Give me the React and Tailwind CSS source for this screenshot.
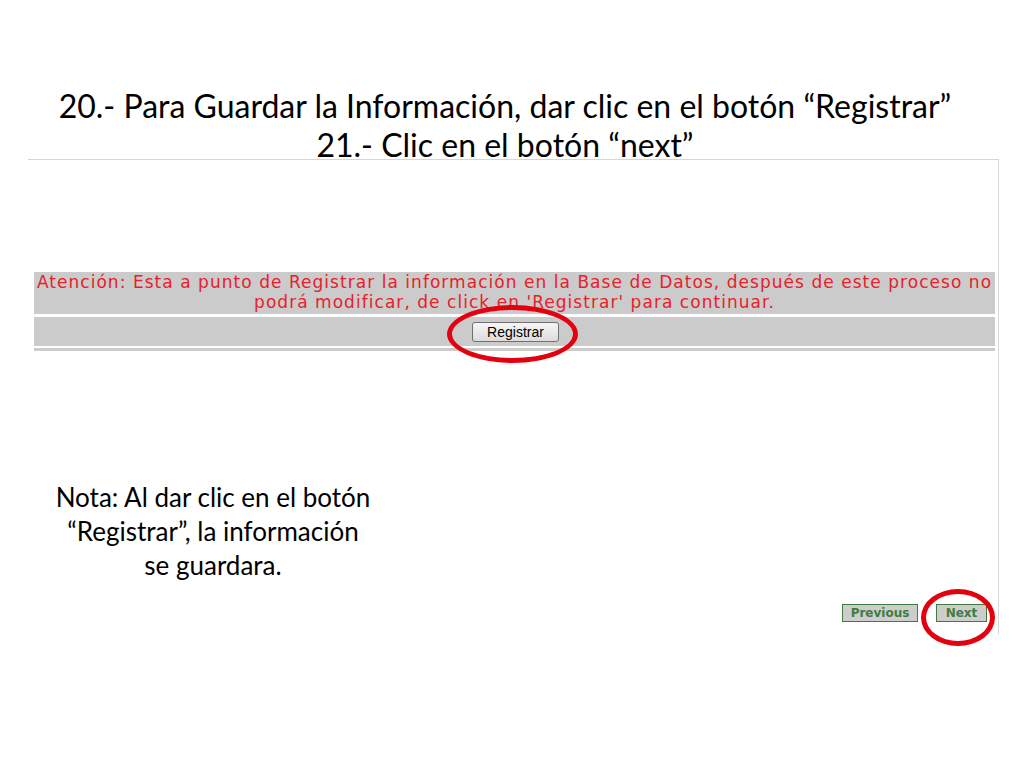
import React from "react";

const RedRing = ({ className }) => (
    <div className={"pointer-events-none absolute rounded-[50%] border-[5px] border-[#e3000f] " + className} />
);

const App = () => {
    return (
        <div className="relative w-[1024px] h-[768px] bg-white overflow-hidden">
            {/* slide title */}
            <div className="h-[159px] pt-[86px] pr-[14px] text-center text-black text-[32px] leading-[39px] font-['Lato','Open_Sans',sans-serif]">
                <p>20.- Para Guardar la Información, dar clic en el botón “Registrar”</p>
                <p>21.- Clic en el botón “next”</p>
            </div>

            {/* screenshot frame */}
            <div className="ml-[28px] w-[971px] h-[475px] border-t border-r border-[#d6d6d6] pt-[112px] pl-[6px] pr-[3px]">
                <div className="bg-[#cbcbcb] h-[42px] text-center text-[#e8202a] text-[17px] tracking-[1.04px] leading-[20px] whitespace-nowrap font-['DejaVu_Sans',Verdana,sans-serif]">
                    Atención: Esta a punto de Registrar la información en la Base de Datos, después de este proceso no
                    <br />
                    podrá modificar, de click en 'Registrar' para continuar.
                </div>
                <div className="mt-[3px] bg-[#cbcbcb] h-[29px] flex items-center justify-center">
                    <button className="w-[87px] h-[20px] ml-[2px] rounded-[3px] border border-[#707070] bg-gradient-to-b from-[#f6f6f6] to-[#dcdcdc] text-[14px] leading-none text-black font-['Liberation_Sans',Arial,sans-serif]">
                        Registrar
                    </button>
                </div>
                <div className="mt-[2px] h-[3px] bg-[#cbcbcb]" />

                <div className="-ml-[6px] mt-[129px] w-[370px] text-center text-black text-[26px] leading-[34px] font-['Lato','Open_Sans',sans-serif]">
                    <p>Nota: Al dar clic en el botón</p>
                    <p>“Registrar”, la información</p>
                    <p>se guardara.</p>
                </div>

                <div className="mt-[22px] flex justify-end gap-[18px] pr-[8px]">
                    <button className="w-[76px] h-[18px] border border-[#3d7d3d] bg-[#cdcdcd] text-[12px] leading-none font-bold text-[#3d7d3d] font-['DejaVu_Sans',Verdana,sans-serif]">
                        Previous
                    </button>
                    <button className="w-[51px] h-[18px] border border-[#3d7d3d] bg-[#cdcdcd] text-[12px] leading-none font-bold text-[#3d7d3d] font-['DejaVu_Sans',Verdana,sans-serif]">
                        Next
                    </button>
                </div>
            </div>

            {/* red highlight marks */}
            <RedRing className="left-[447px] top-[305px] w-[131px] h-[58px]" />
            <RedRing className="left-[921px] top-[589px] w-[74px] h-[57px]" />
        </div>
    );
};

export default App;
